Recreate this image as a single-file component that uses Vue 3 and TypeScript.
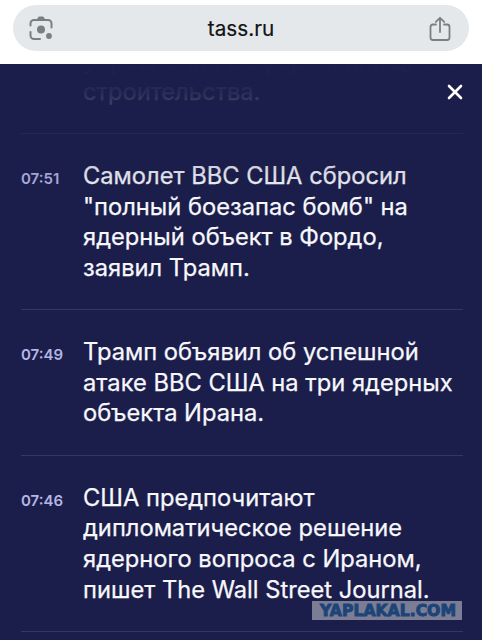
<script setup lang="ts">
import { ref } from 'vue'

interface Noticia {
  hora: string
  lineas: string[]
}

const abierto = ref(true)
const sitio = 'tass.ru'

const noticias: Noticia[] = [
  { hora: '', lineas: ['управления в сфере жилищного', 'строительства.'] },
  { hora: '07:51', lineas: ['Самолет ВВС США сбросил', '"полный боезапас бомб" на', 'ядерный объект в Фордо,', 'заявил Трамп.'] },
  { hora: '07:49', lineas: ['Трамп объявил об успешной', 'атаке ВВС США на три ядерных', 'объекта Ирана.'] },
  { hora: '07:46', lineas: ['США предпочитают', 'дипломатическое решение', 'ядерного вопроса с Ираном,', 'пишет The Wall Street Journal.'] },
]

function cerrar() {
  abierto.value = false
}
</script>

<template>
  <div class="pantalla">
    <header class="navegador">
      <div class="direccion">
        <svg class="lente" width="24" height="25" viewBox="0 0 24 25">
          <g fill="none" stroke="#7a7f82" stroke-width="2" stroke-linecap="round">
            <path d="M1.500 9.500V7.500a3.500 3.500 0 0 1 3.500-3.500h14a3.500 3.500 0 0 1 3.500 3.500V11.500" />
            <path d="M1.500 16v3.500a3.500 3.500 0 0 0 3.500 3.500H11" />
          </g>
          <path d="M7 4.500L9 1.500Q9.500 .5 10.500 .5h3Q14.500 .5 15 1.500L17 4.500z" fill="#7a7f82" />
          <circle cx="12" cy="13.500" r="4" fill="#7a7f82" />
          <circle cx="20" cy="20" r="2.900" fill="#7a7f82" />
        </svg>
        <span class="sitio">{{ sitio }}</span>
        <svg class="compartir" width="22" height="26" viewBox="0 0 22 26">
          <g fill="none" stroke="#7a7f82" stroke-width="1.800" stroke-linecap="round" stroke-linejoin="round">
            <path d="M7 8.500H4Q1.500 8.500 1.500 11v10.500Q1.500 24 4 24h14Q20.500 24 20.500 21.500V11Q20.500 8.500 18 8.500h-3" />
            <path d="M11 16V1.800M6.800 5.800L11 1.800l4.200 4" />
          </g>
        </svg>
      </div>
    </header>

    <main v-if="abierto" class="panel">
      <div class="lista">
        <article v-for="(n, i) in noticias" :key="i" class="noticia">
          <time class="hora">{{ n.hora }}</time>
          <p class="texto">
            <span v-for="l in n.lineas" :key="l">{{ l }}</span>
          </p>
        </article>
      </div>
      <div class="sombra"></div>
      <button class="cerrar" aria-label="Закрыть" @click="cerrar">
        <svg width="16" height="16" viewBox="0 0 16 16">
          <path d="M2 2l12 12M14 2L2 14" stroke="#fff" stroke-width="2.600" stroke-linecap="round" />
        </svg>
      </button>
    </main>

    <div class="marca">
      <svg width="150" height="19" viewBox="0 0 150 19">
        <text x="8" y="15" textLength="136" lengthAdjust="spacingAndGlyphs">YAPLAKAL.COM</text>
      </svg>
    </div>
  </div>
</template>

<style>
html,
body {
  margin: 0;
  overflow: hidden;
  background: #1b1e4a;
}
</style>

<style scoped>
.pantalla {
  position: relative;
  display: flex;
  flex-direction: column;
  width: 482px;
  height: 640px;
  overflow: hidden;
  font-family: Inter, "Liberation Sans", sans-serif;
}
.navegador {
  box-sizing: border-box;
  height: 64px;
  padding: 5px 13px 0;
  background: #fff;
}
.direccion {
  display: flex;
  align-items: center;
  justify-content: space-between;
  box-sizing: border-box;
  height: 46px;
  padding: 0 18px 0 16px;
  border-radius: 23px;
  background: #e4e8eb;
}
.sitio {
  font-size: 20.7px;
  color: #111314;
  -webkit-text-stroke: 0.2px #111314;
}
.compartir {
  margin-top: 2px;
}
.panel {
  position: relative;
  flex: 1;
  min-height: 0;
  overflow: hidden;
  background: #1b1e4a;
}
.lista {
  display: flex;
  flex-direction: column;
  margin-top: -45px;
  padding: 0 19px 0 21px;
}
.noticia {
  display: flex;
  align-items: flex-start;
  padding: 27px 0 25.400px;
  border-bottom: 1px solid #34365f;
}
.hora {
  flex: 0 0 62px;
  padding-top: 3px;
  font-size: 15px;
  font-weight: 600;
  line-height: 30.7px;
  color: #b5b6e3;
}
.texto {
  margin: 0;
  font-size: 23.7px;
  line-height: 30.7px;
  white-space: nowrap;
  color: #f7f7fc;
  -webkit-text-stroke: 0.25px #f7f7fc;
}
.texto span {
  display: block;
}
/* degradado que oculta la parte superior de la lista */
.sombra {
  position: absolute;
  top: 0;
  left: 0;
  right: 0;
  height: 140px;
  pointer-events: none;
  background: linear-gradient(#1b1e4a 0, rgba(27, 30, 74, 0.94) 28px, rgba(27, 30, 74, 0.6) 70px, rgba(27, 30, 74, 0.15) 105px, rgba(27, 30, 74, 0) 135px);
}
.cerrar {
  position: absolute;
  top: 20px;
  right: 19px;
  display: flex;
  padding: 0;
  border: 0;
  background: none;
}
.marca {
  position: absolute;
  left: 312px;
  top: 601px;
  display: flex;
  background: #7b7d94;
}
.marca text {
  font-family: "DejaVu Sans", sans-serif;
  font-size: 15px;
  font-weight: 700;
  fill: #1c4478;
  stroke: #1c4478;
  stroke-width: 0.9;
}
</style>
